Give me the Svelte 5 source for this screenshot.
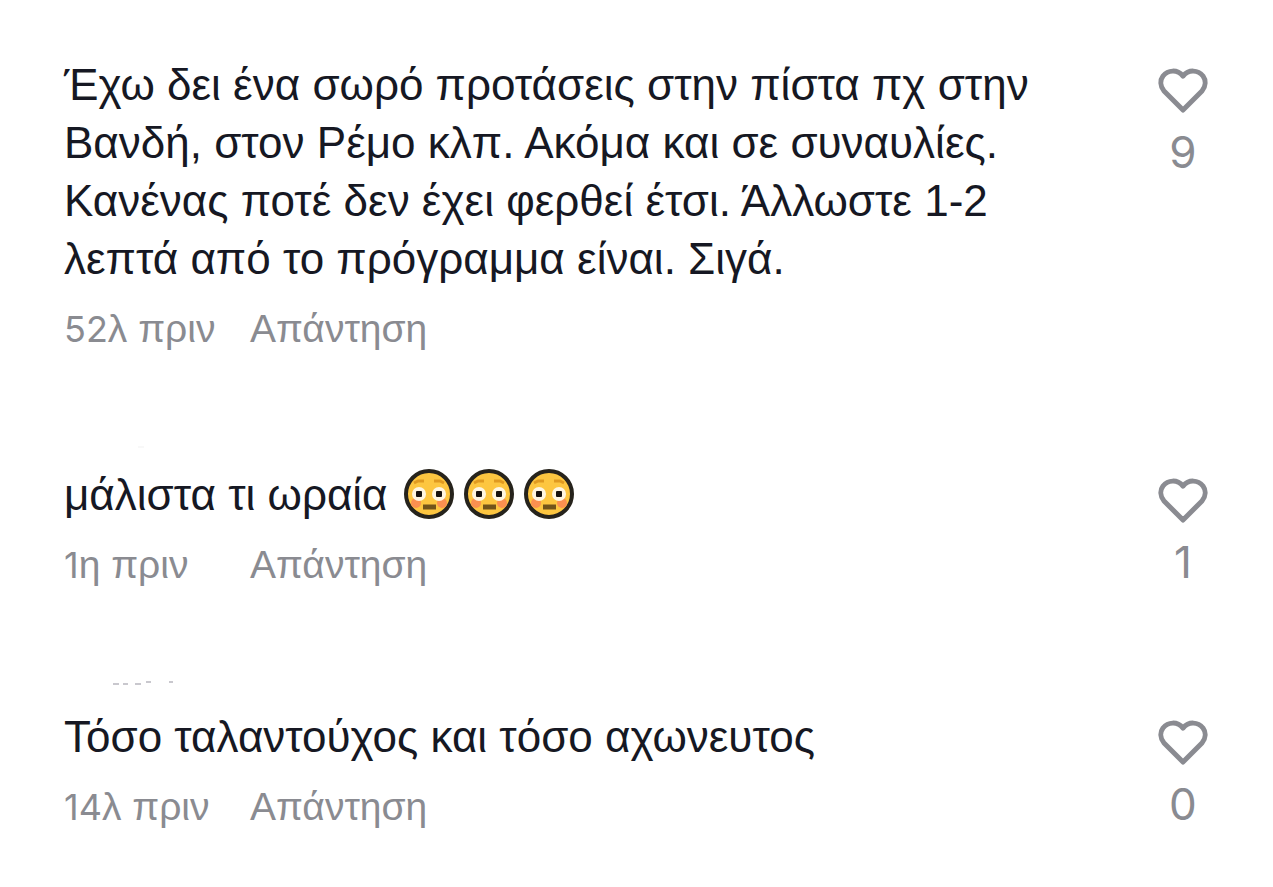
<script>
  let comments = [
    {
      text: 'Έχω δει ένα σωρό προτάσεις στην πίστα πχ στην Βανδή, στον Ρέμο κλπ. Ακόμα και σε συναυλίες. Κανένας ποτέ δεν έχει φερθεί έτσι. Άλλωστε 1-2 λεπτά από το πρόγραμμα είναι. Σιγά.',
      amount: 52,
      unit: 'λ πριν',
      likes: 9,
      emojis: 0,
      trace: null
    },
    {
      text: 'μάλιστα τι ωραία',
      amount: 1,
      unit: 'η πριν',
      likes: 1,
      emojis: 3,
      trace: { height: 22, faint: true, path: 'M74 3h6' }
    },
    {
      text: 'Τόσο ταλαντούχος και τόσο αχωνευτος',
      amount: 14,
      unit: 'λ πριν',
      likes: 0,
      emojis: 0,
      trace: { height: 28, faint: false, path: 'M49 4h6M59 4h5M71 4h6M82 2h5M105 2h4' }
    }
  ];
</script>

<main class="comments">
  {#each comments as comment}
    <article>
      {#if comment.trace}
        <svg class="trace" class:faint={comment.trace.faint} width="160" height={comment.trace.height} aria-hidden="true">
          <path d={comment.trace.path} />
        </svg>
      {/if}
      <div class="comment">
        <div class="content">
          <p class="text">
            {comment.text}
            {#if comment.emojis}
              <span class="emojis">
                {#each Array(comment.emojis) as _}
                  <svg class="emoji" viewBox="0 0 50 50" role="img" aria-label="flushed face">
                    <circle cx="25" cy="25" r="23" fill="#fdc640" stroke="#26231c" stroke-width="4" />
                    <path d="M10 14l4-2h6M30 12h6l4 2" fill="none" stroke="#e09a20" stroke-width="3" />
                    <circle cx="12" cy="34" r="5" fill="#fa9050" />
                    <circle cx="38" cy="34" r="5" fill="#fa9050" />
                    <circle cx="15" cy="25" r="7" fill="#fff6e0" />
                    <circle cx="35" cy="25" r="7" fill="#fff6e0" />
                    <rect x="12" y="22" width="6" height="6" rx="1" fill="#17130f" />
                    <rect x="32" y="22" width="6" height="6" rx="1" fill="#17130f" />
                    <path d="M19 38h13" stroke="#72541a" stroke-width="5" />
                  </svg>
                {/each}
              </span>
            {/if}
          </p>
          <div class="meta">
            <span class="time"><span class="amount">{comment.amount}</span>{comment.unit}</span>
            <button class="reply">Απάντηση</button>
          </div>
        </div>
        <button class="like" aria-label="Like, {comment.likes}">
          <svg class="heart" viewBox="0 0 50 46" aria-hidden="true">
            <path d="M25 42L6 23C2 18 2 12 5 8C10 2 19 1 25 8C31 1 40 2 45 8C48 12 48 18 44 23Z" />
          </svg>
          <span class="count">{comment.likes}</span>
        </button>
      </div>
    </article>
  {/each}
</main>

<style>
  :global(body) {
    margin: 0;
    background: #fff;
    font-family: 'Liberation Sans', Arial, sans-serif;
  }
  .comments {
    display: flex;
    flex-direction: column;
    gap: 91px;
    padding: 56px 62px 48px 64px;
  }
  .trace {
    display: block;
    fill: none;
    stroke: #c9c8ce;
    stroke-width: 2;
  }
  .faint {
    stroke: #f8f8f8;
  }
  .comment {
    display: flex;
    justify-content: space-between;
  }
  .content {
    flex: 1;
    max-width: 980px;
  }
  .text {
    margin: 0;
    color: #161823;
    font-size: 44px;
    line-height: 58px;
  }
  .meta {
    display: flex;
    margin-top: 17px;
    color: #8a8b91;
    font-size: 39px;
    line-height: 48px;
  }
  .time {
    width: 186px;
  }
  .amount {
    font-family: Inter, sans-serif;
    font-size: 36px;
    line-height: 1;
  }
  button {
    padding: 0;
    border: 0;
    background: none;
    color: #8a8b91;
    font: inherit;
    cursor: pointer;
  }
  .emojis {
    display: inline-flex;
    gap: 10px;
    margin: 3px 0 0 4px;
    vertical-align: top;
  }
  .emoji {
    width: 50px;
    height: 50px;
  }
  .like {
    display: flex;
    flex-direction: column;
    align-items: center;
    align-self: flex-start;
    gap: 14px;
    width: 56px;
    padding-top: 12px;
  }
  .heart {
    width: 50px;
    height: 46px;
    fill: none;
    stroke: #8a8b91;
    stroke-width: 5;
    stroke-linejoin: round;
  }
  .count {
    font-family: Inter, sans-serif;
    font-size: 44px;
    line-height: 48px;
  }
</style>
